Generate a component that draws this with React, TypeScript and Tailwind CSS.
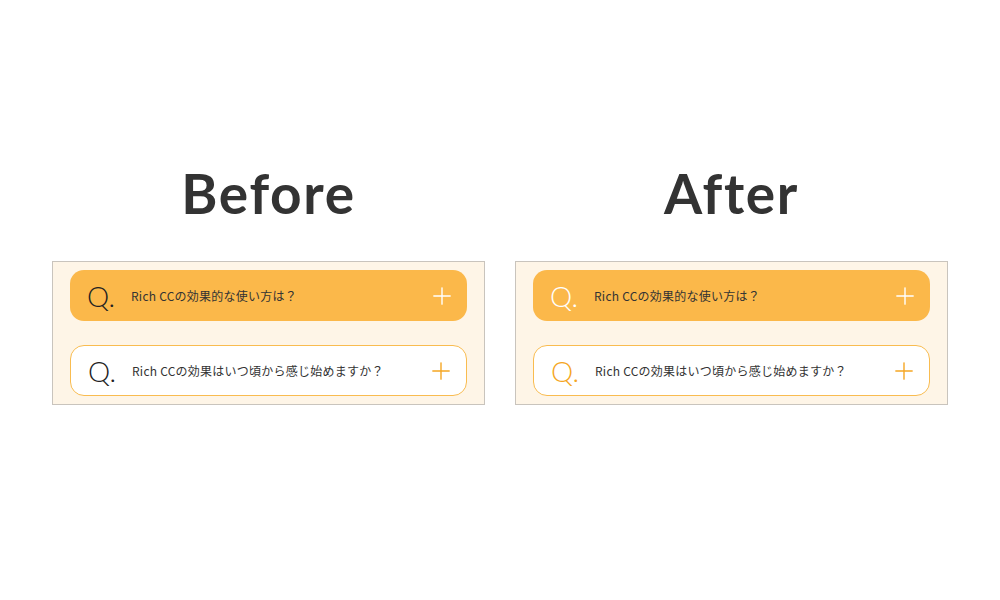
import { Plus } from 'lucide-react';

type Item = { q: string; filled: boolean };

const items: Item[] = [
  { q: 'Rich CCの効果的な使い方は？', filled: true },
  { q: 'Rich CCの効果はいつ頃から感じ始めますか？', filled: false },
];

function Card({ item, after }: { item: Item; after: boolean }) {
  const qColor = after ? (item.filled ? 'text-white' : 'text-[#f5a623]') : 'text-[#222]';
  return (
    <div
      className={
        'flex items-center h-[51px] rounded-[14px] pl-[17px] pr-[11px] ' +
        (item.filled ? 'bg-[#fbb84a]' : 'bg-white border border-[#f9bc50]')
      }
    >
      <span
        className={'w-[44px] text-[28px] font-light leading-none ' + qColor}
        style={{ fontFamily: '"Lato", "DejaVu Sans", sans-serif' }}
      >
        Q.
      </span>
      <span
        className="flex-1 text-[12px] text-[#333] tracking-[0.02em]"
        style={{ fontFamily: '"Noto Sans CJK JP", "Noto Sans", sans-serif' }}
      >
        {item.q}
      </span>
      <Plus
        className={'w-[28px] h-[28px] ' + (item.filled ? 'text-white' : 'text-[#f5a623]')}
        strokeWidth={1.2}
      />
    </div>
  );
}

function Column({ title, after }: { title: string; after: boolean }) {
  return (
    <div className="flex flex-col">
      <h2
        className="text-center text-[55px] font-bold text-[#333] leading-none tracking-[0.03em] h-[99px] pt-[4px]"
        style={{ fontFamily: '"Lato", "Liberation Sans", sans-serif' }}
      >
        {title}
      </h2>
      <div className="h-[144px] border border-[#c9c4bd] bg-[#fef5e7] px-[17px] pt-[8px] flex flex-col gap-[24px]">
        {items.map((it) => (
          <Card key={it.q} item={it} after={after} />
        ))}
      </div>
    </div>
  );
}

export default function App() {
  return (
    <div className="w-[1000px] h-[600px] bg-white pt-[162px] px-[52px]">
      <div className="grid grid-cols-2 gap-[30px]">
        <Column title="Before" after={false} />
        <Column title="After" after={true} />
      </div>
    </div>
  );
}
